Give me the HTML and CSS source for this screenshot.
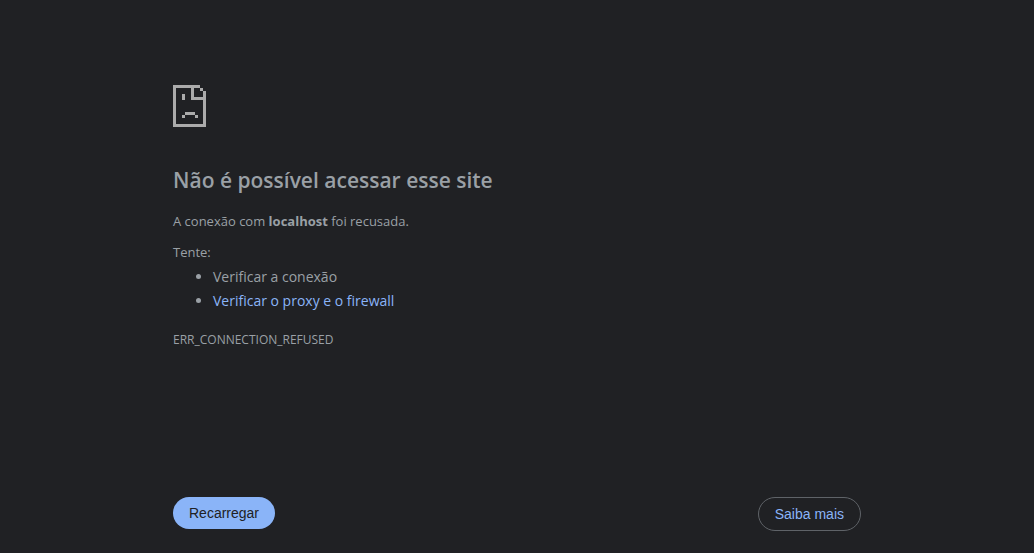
FILE: index.html
```html
<!DOCTYPE html>
<html lang="pt-BR">
<head>
<meta charset="utf-8">
<meta name="viewport" content="width=device-width, initial-scale=1">
<title>localhost</title>
<link rel="stylesheet" href="styles.css">
</head>
<body>
<main class="error-page">
  <div class="message">
    <svg class="sad-page" viewBox="0 0 33 42" fill="currentColor" shape-rendering="crispEdges" aria-hidden="true">
      <path d="M0 0H27V3H30V6H33V42H0ZM3 3V39H30V15H18V3ZM21 3V12H30V6H27V3Z" fill-rule="evenodd"/>
      <path d="M9 9h3v6H9zM12 27h10v3H12zM9 30h3v3H9zM22 30h3v3h-3z"/>
    </svg>
    <h1 class="title">Não é possível acessar esse site</h1>
    <p class="summary">A conexão com <strong>localhost</strong> foi recusada.</p>
    <p class="summary">Tente:</p>
    <ul class="suggestions">
      <li>Verificar a conexão</li>
      <li><a class="link" href="#proxy">Verificar o proxy e o firewall</a></li>
    </ul>
    <p class="code">ERR_CONNECTION_REFUSED</p>
  </div>
  <div class="actions">
    <button class="button primary" type="button">Recarregar</button>
    <button class="button secondary" type="button">Saiba mais</button>
  </div>
</main>
</body>
</html>
```
FILE: styles.css
```css
* {
  box-sizing: border-box;
}

body {
  margin: 0;
  background: #202124;
  color: #9aa0a6;
  font-family: "Open Sans", "Noto Sans", sans-serif;
}

.error-page {
  display: flex;
  flex-direction: column;
  justify-content: space-between;
  gap: 32px;
  max-width: 736px;
  min-height: 100vh;
  margin: 0 auto;
  padding: 85px 24px 22px;
}

.sad-page {
  display: block;
  width: 33px;
  height: 42px;
  color: #ababab;
}

.title {
  margin: 38px 0 16px;
  font-size: 21px;
  font-weight: 600;
  line-height: 30px;
}

.summary {
  margin: 0 0 11px;
  font-size: 13px;
  line-height: 20px;
}

.suggestions {
  margin: -8px 0 0;
  padding-left: 40px;
  font-size: 14px;
  font-variant-ligatures: none;
  line-height: 24px;
}

.link {
  color: #8ab4f8;
  text-decoration: none;
}

.code {
  margin: 17px 0 0;
  font-size: 12px;
  line-height: 20px;
}

.actions {
  display: flex;
  justify-content: space-between;
  align-items: flex-start;
}

.button {
  padding: 8px 16px;
  border: 0;
  border-radius: 20px;
  font: 14px/16px "Liberation Sans", Arial, sans-serif;
  cursor: pointer;
}

.primary {
  background: #8ab4f8;
  color: #202124;
}

.secondary {
  border: 1px solid #5f6368;
  background: transparent;
  color: #8ab4f8;
}
```
